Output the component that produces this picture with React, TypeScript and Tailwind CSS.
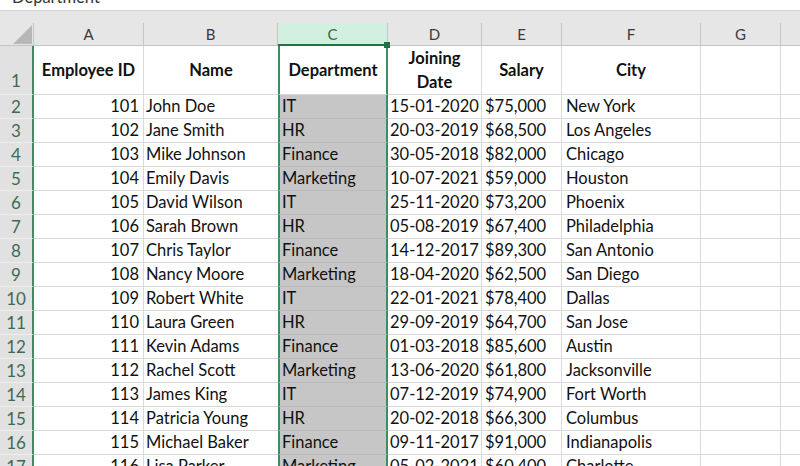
type Employee = {
  id: number;
  name: string;
  dept: string;
  joined: string;
  salary: string;
  city: string;
};

const EMPLOYEES: Employee[] = [
  { id: 101, name: "John Doe", dept: "IT", joined: "15-01-2020", salary: "$75,000", city: "New York" },
  { id: 102, name: "Jane Smith", dept: "HR", joined: "20-03-2019", salary: "$68,500", city: "Los Angeles" },
  { id: 103, name: "Mike Johnson", dept: "Finance", joined: "30-05-2018", salary: "$82,000", city: "Chicago" },
  { id: 104, name: "Emily Davis", dept: "Marketing", joined: "10-07-2021", salary: "$59,000", city: "Houston" },
  { id: 105, name: "David Wilson", dept: "IT", joined: "25-11-2020", salary: "$73,200", city: "Phoenix" },
  { id: 106, name: "Sarah Brown", dept: "HR", joined: "05-08-2019", salary: "$67,400", city: "Philadelphia" },
  { id: 107, name: "Chris Taylor", dept: "Finance", joined: "14-12-2017", salary: "$89,300", city: "San Antonio" },
  { id: 108, name: "Nancy Moore", dept: "Marketing", joined: "18-04-2020", salary: "$62,500", city: "San Diego" },
  { id: 109, name: "Robert White", dept: "IT", joined: "22-01-2021", salary: "$78,400", city: "Dallas" },
  { id: 110, name: "Laura Green", dept: "HR", joined: "29-09-2019", salary: "$64,700", city: "San Jose" },
  { id: 111, name: "Kevin Adams", dept: "Finance", joined: "01-03-2018", salary: "$85,600", city: "Austin" },
  { id: 112, name: "Rachel Scott", dept: "Marketing", joined: "13-06-2020", salary: "$61,800", city: "Jacksonville" },
  { id: 113, name: "James King", dept: "IT", joined: "07-12-2019", salary: "$74,900", city: "Fort Worth" },
  { id: 114, name: "Patricia Young", dept: "HR", joined: "20-02-2018", salary: "$66,300", city: "Columbus" },
  { id: 115, name: "Michael Baker", dept: "Finance", joined: "09-11-2017", salary: "$91,000", city: "Indianapolis" },
  { id: 116, name: "Lisa Parker", dept: "Marketing", joined: "05-02-2021", salary: "$60,400", city: "Charlotte" },
];

function ColumnHeaders() {
  return (
    <div className="flex h-[23px] bg-[#e6e6e6] text-[15px] leading-[22px] text-[#3a3a3a]">
      <div className="h-full w-[34px] shrink-0 border-r border-b border-[#c4c4c4]">
        <svg width="33" height="22" viewBox="0 0 33 22">
          <polygon points="13,21 32,21 32,2" fill="#b7b7b7" />
        </svg>
      </div>
      <div className="w-[110px] shrink-0 border-r border-b border-[#c4c4c4] text-center">A</div>
      <div className="w-[134px] shrink-0 border-r border-b border-[#c4c4c4] text-center">B</div>
      <div className="relative w-[110px] shrink-0 border-r border-r-[#c4c4c4] border-b-2 border-b-[#217346] bg-[#d3efdf] text-center text-[#2e6b4a]">
        C
        <span className="absolute -right-[3px] -bottom-[4px] z-10 h-[6px] w-[6px] bg-[#217346]" />
      </div>
      <div className="w-[94px] shrink-0 border-r border-b border-[#c4c4c4] text-center">D</div>
      <div className="w-[80px] shrink-0 border-r border-b border-[#c4c4c4] text-center">E</div>
      <div className="w-[139px] shrink-0 border-r border-b border-[#c4c4c4] text-center">F</div>
      <div className="w-[80px] shrink-0 border-r border-b border-[#c4c4c4] text-center">G</div>
      <div className="flex-1 border-b border-[#c4c4c4]" />
    </div>
  );
}

function RowHeader({ n, tall }: { n: number; tall?: boolean }) {
  return (
    <div
      className={`flex w-[34px] shrink-0 justify-center border-r-2 border-r-[#3f8b62] border-b border-b-[#efefef] bg-[#e1e1e1] text-[17px] text-[#3d6b52] ${
        tall ? "items-end pb-[3px] leading-[20px]" : "items-center leading-[23px]"
      }`}
    >
      {n}
    </div>
  );
}

function TitleRow() {
  const head = "flex shrink-0 items-center justify-center border-b border-[#d9d9d9] text-center font-bold leading-[24px]";
  return (
    <div className="flex h-[49px]">
      <RowHeader n={1} tall />
      <div className={`${head} w-[110px] border-r`}>Employee ID</div>
      <div className={`${head} w-[134px]`}>Name</div>
      <div className={`${head} w-[110px] border-x-2 border-x-[#3f8b62] bg-white`}>Department</div>
      <div className={`${head} w-[94px] border-r`}>
        Joining
        <br />
        Date
      </div>
      <div className={`${head} w-[80px] border-r`}>Salary</div>
      <div className={`${head} w-[139px] border-r`}>City</div>
      <div className={`${head} w-[80px] border-r`} />
      <div className="flex-1 border-b border-[#d9d9d9]" />
    </div>
  );
}

function DataRow({ row, n }: { row: Employee; n: number }) {
  const cell = "shrink-0 overflow-hidden whitespace-nowrap border-b border-[#d9d9d9] leading-[23px]";
  return (
    <div className="flex h-[24px]">
      <RowHeader n={n} />
      <div className={`${cell} w-[110px] border-r pr-[4px] text-right`}>{row.id}</div>
      <div className={`${cell} w-[134px] pl-[2px]`}>{row.name}</div>
      <div className="w-[110px] shrink-0 border-x-2 border-x-[#3f8b62] border-b border-b-[#bababa] bg-[#c6c6c6] pl-[2px] leading-[23px]">
        {row.dept}
      </div>
      <div className={`${cell} w-[94px] border-r pl-[2px]`}>{row.joined}</div>
      <div className={`${cell} w-[80px] border-r pl-[3px]`}>{row.salary}</div>
      <div className={`${cell} w-[139px] border-r pl-[4px]`}>{row.city}</div>
      <div className={`${cell} w-[80px] border-r`} />
      <div className="flex-1 border-b border-[#d9d9d9]" />
    </div>
  );
}

export default function App() {
  return (
    <div className="h-[466px] w-[800px] overflow-hidden bg-white font-['Lato',sans-serif] text-[16.5px] text-[#111]">
      {/* formula bar, mostly scrolled off */}
      <div className="h-[11px] overflow-hidden border-b border-[#d4d4d4] pl-[12px]">
        <div className="-mt-[11px] leading-[17px] text-[#333]">Department</div>
      </div>
      <div className="h-[12px] bg-[#e6e6e6]" />
      <ColumnHeaders />
      <TitleRow />
      {EMPLOYEES.map((row, i) => (
        <DataRow key={row.id} row={row} n={i + 2} />
      ))}
    </div>
  );
}
